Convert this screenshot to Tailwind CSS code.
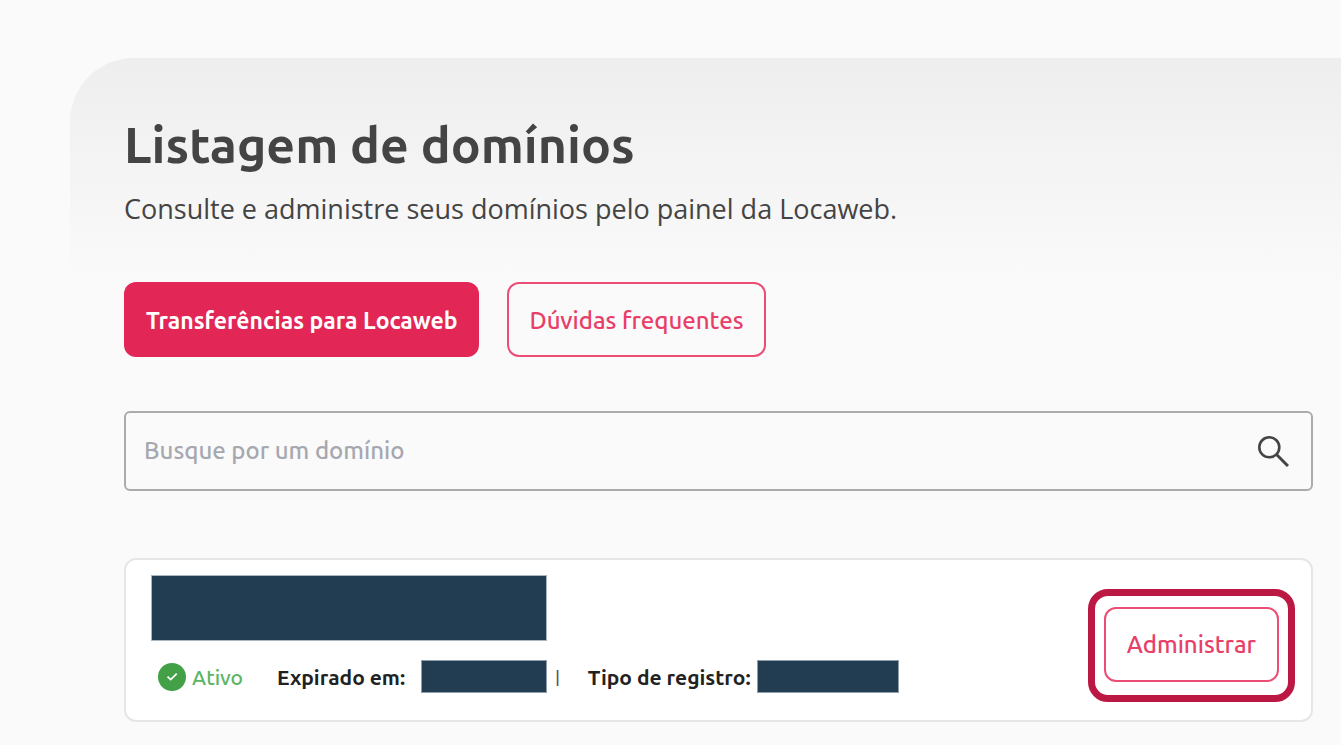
<!DOCTYPE html>
<html lang="pt-BR">
<head>
<meta charset="UTF-8">
<meta name="viewport" content="width=device-width, initial-scale=1.0">
<title>Listagem de domínios</title>
<script src="https://cdn.jsdelivr.net/npm/@tailwindcss/browser@4"></script>
</head>
<body class="bg-[#fafafa] font-['Ubuntu','Noto_Sans',sans-serif] text-[#444]">
<main class="pt-[58px] pl-[70px]">
  <header class="rounded-tl-[64px] bg-linear-to-b from-[#eee] to-[#fafafa] px-[54px] pt-[54px] pb-[55px]">
    <h1 class="text-[50px] leading-[64px] font-semibold">Listagem de domínios</h1>
    <p class="mt-[15px] font-['Open_Sans',sans-serif] text-[27px] leading-[36px]">Consulte e administre seus domínios pelo painel da Locaweb.</p>
  </header>

  <div class="pl-[54px] pr-7">
    <div class="flex gap-7 leading-[32px]">
      <button type="button" class="h-[75px] rounded-xl bg-[#e22655] px-[22px] pt-[2px] text-[23px] font-bold text-white">Transferências para Locaweb</button>
      <button type="button" class="h-[75px] rounded-xl border-2 border-[#ec4d75] px-5 pt-[2px] text-2xl font-medium text-[#e83e68]">Dúvidas frequentes</button>
    </div>

    <form class="mt-[54px] flex h-20 items-center rounded-md border-2 border-[#ababab] pl-[18px] pr-[22px]">
      <label for="busca" class="sr-only">Busque por um domínio</label>
      <input id="busca" type="text" placeholder="Busque por um domínio" class="min-w-0 flex-1 text-2xl leading-[48px] font-medium outline-none placeholder:text-[#a6a8b0]">
      <button type="submit" aria-label="Buscar">
        <svg class="size-8" viewBox="0 0 32 32" fill="none" stroke="#444" stroke-width="2.6">
          <circle cx="12.3" cy="12.3" r="10"/>
          <path d="M19.5 19.5l11.5 11.5" stroke-width="3"/>
        </svg>
      </button>
    </form>

    <section class="mt-[67px] flex items-center justify-between rounded-xl border-2 border-[#e6e6e6] bg-white py-[15px] pl-[25px] pr-4">
      <div class="pb-3">
        <div class="h-[66px] w-[396px] border border-[#a9b7c3] bg-[#223c52]"></div>
        <div class="mt-[19px] flex items-center pl-[7px] text-[21px] leading-[32px] text-[#222]">
          <svg class="size-7" viewBox="0 0 28 28" fill="none">
            <circle cx="14" cy="14" r="14" fill="#43a047"/>
            <path d="M9.5 13.6l3.2 3 6-6" stroke="#fff" stroke-width="1.8"/>
          </svg>
          <span class="ml-[6px] font-medium text-[#5cb562]">Ativo</span>
          <span class="ml-[34px] font-bold">Expirado em:</span>
          <span class="ml-4 h-[33px] w-[126px] border border-[#8f9fae] bg-[#223c52]"></span>
          <span class="ml-2 text-base font-medium text-[#555]">|</span>
          <span class="ml-7 font-bold">Tipo de registro:</span>
          <span class="ml-[6px] h-[33px] w-[142px] border border-[#8f9fae] bg-[#223c52]"></span>
        </div>
      </div>
      <div class="mt-[10px] rounded-[20px] border-[7px] border-[#bc1844] px-[9px] pt-[11px] pb-[13px]">
        <button type="button" class="h-[75px] rounded-xl border-2 border-[#ec4d75] px-[21px] pt-[2px] text-2xl leading-[32px] font-medium text-[#e83e68]">Administrar</button>
      </div>
    </section>
  </div>
</main>
</body>
</html>
